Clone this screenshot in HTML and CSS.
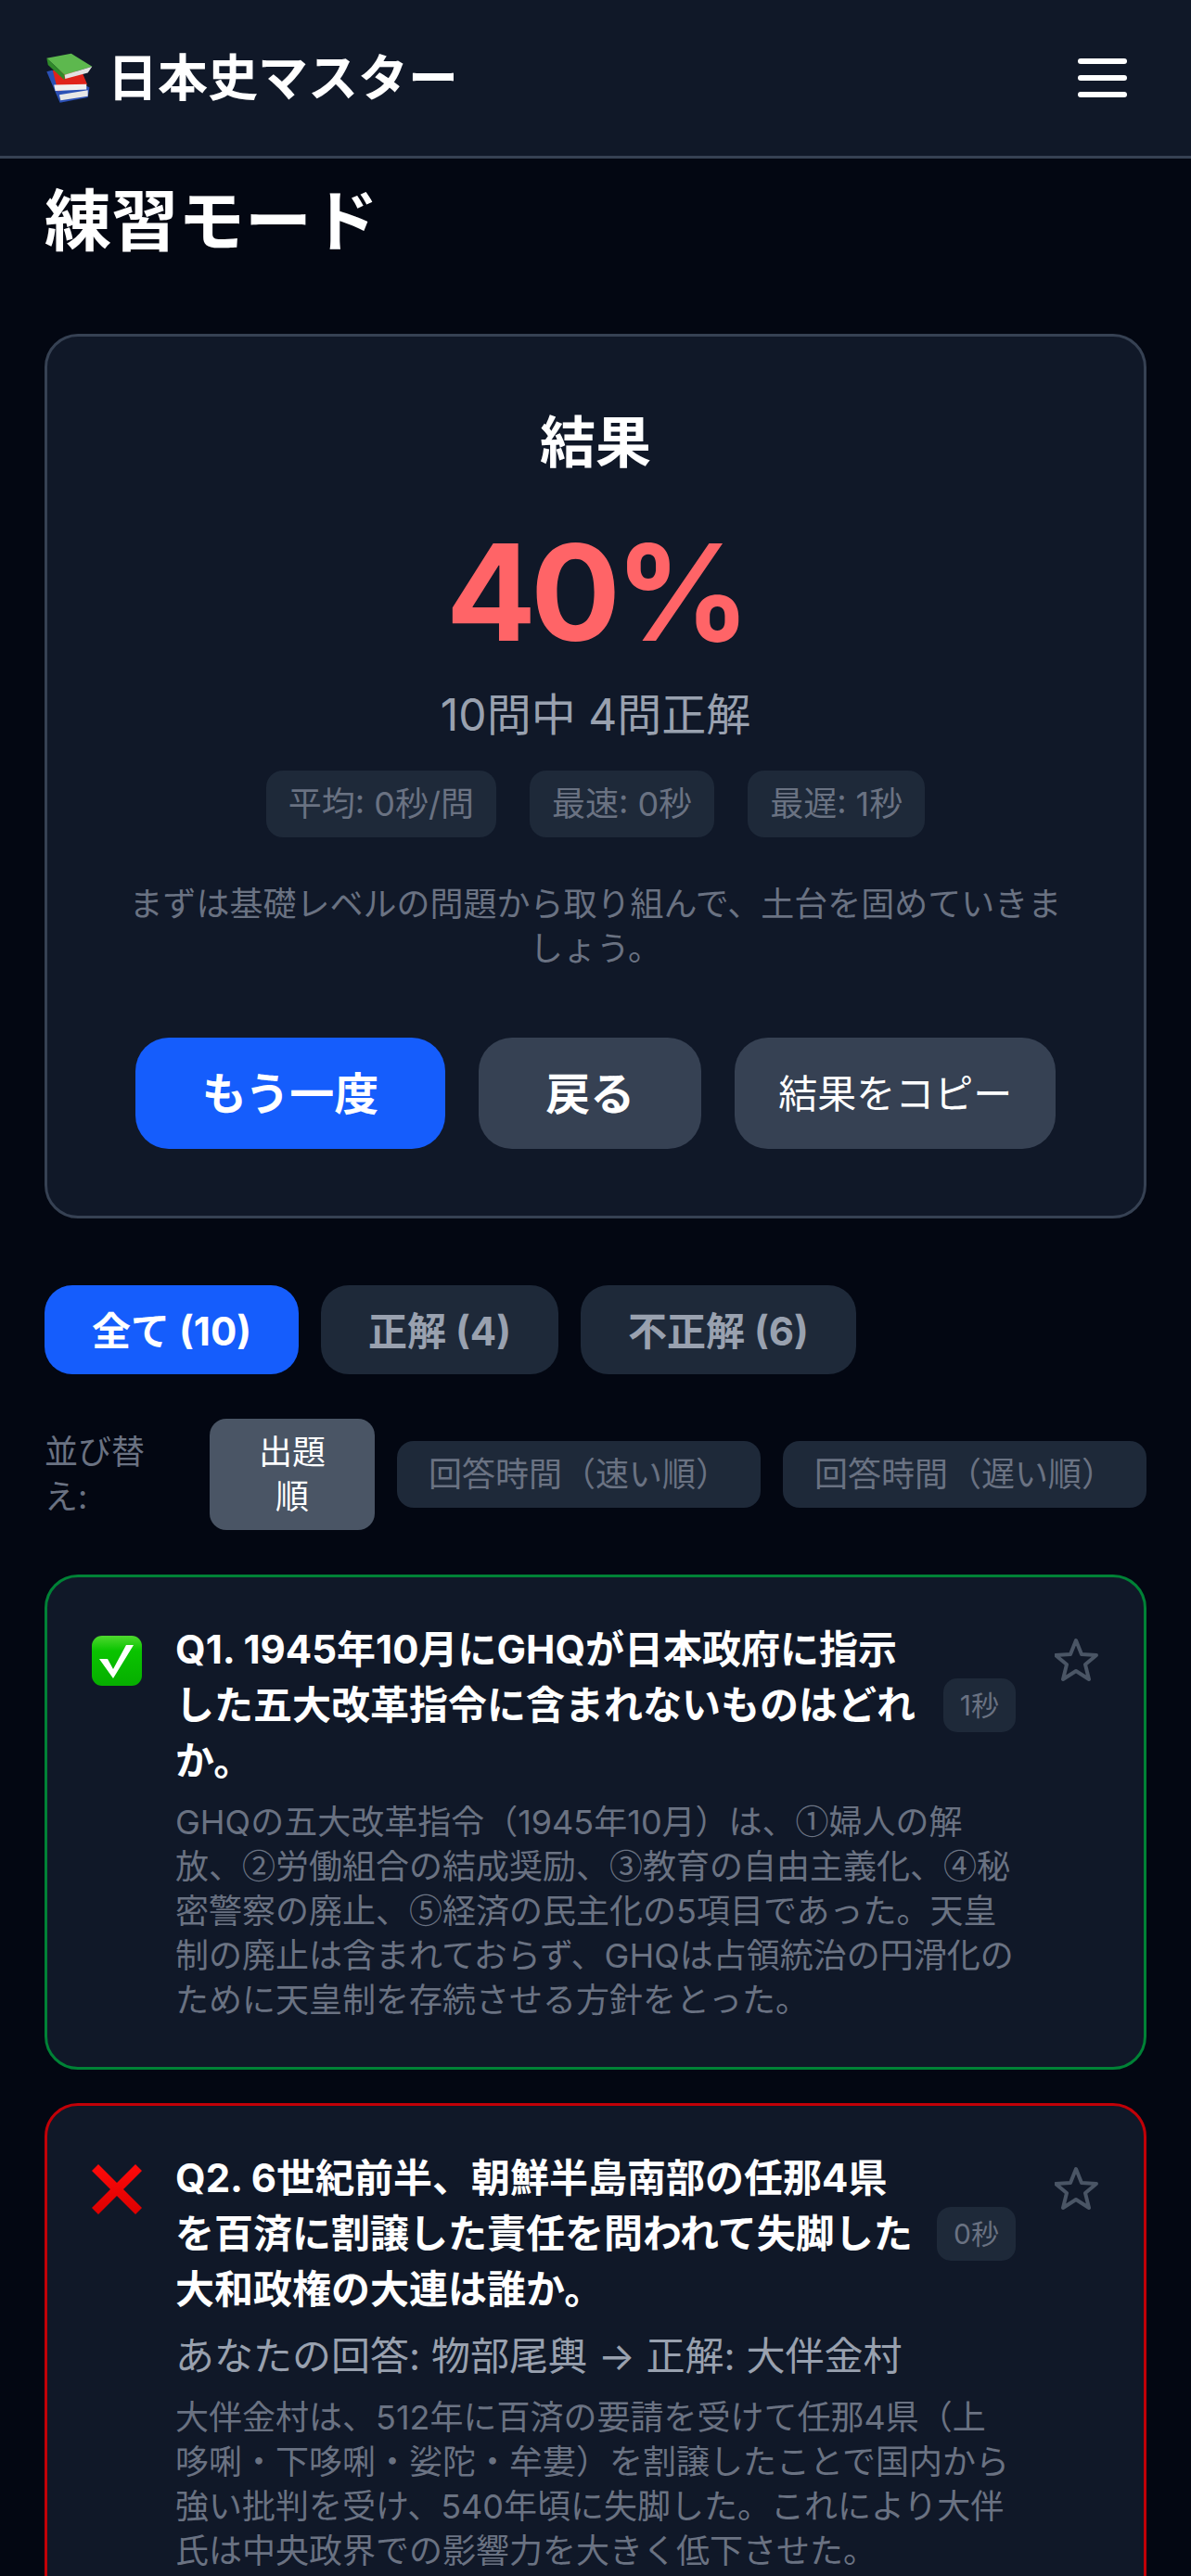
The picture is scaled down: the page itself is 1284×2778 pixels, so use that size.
FILE: index.html
```html
<!DOCTYPE html>
<html lang="ja">
<head>
<meta charset="UTF-8">
<meta name="viewport" content="width=device-width, initial-scale=1.0">
<title>日本史マスター</title>
<link rel="stylesheet" href="styles.css">
</head>
<body>
<header class="header">
  <div class="logo">
    <svg class="logo-icon" viewBox="60 50 150 165" aria-hidden="true">
      <path d="M66 112 L82 108 L195 160 L190 190 L106 206 Z" fill="#2b50b5"/>
      <path d="M104 182 L190 168 L190 186 L108 199 Z" fill="#e6e6e6"/>
      <path d="M84 108 L172 112 L188 150 L100 172 Z" fill="#e0231a"/>
      <path d="M88 152 L186 150 L186 166 L92 170 Z" fill="#f0f0f0"/>
      <path d="M66 72 L140 58 L203 97 L120 122 Z" fill="#5db84e"/>
      <path d="M66 72 L120 122 L120 138 L70 92 Z" fill="#2f8a2a"/>
      <path d="M120 122 L203 97 L190 116 L122 134 Z" fill="#e2e2e2"/>
    </svg>
    <span class="logo-text">日本史マスター</span>
  </div>
  <button class="menu-btn" aria-label="menu"><i></i><i></i><i></i></button>
</header>

<main class="page">
  <h1 class="page-title">練習モード</h1>

  <section class="result-card">
    <h2 class="result-title">結果</h2>
    <div class="score">40%</div>
    <p class="score-sub">10問中 4問正解</p>
    <div class="stats">
      <span class="stat">平均: 0秒/問</span>
      <span class="stat">最速: 0秒</span>
      <span class="stat">最遅: 1秒</span>
    </div>
    <p class="advice">まずは基礎レベルの問題から取り組んで、土台を固めていきましょう。</p>
    <div class="actions">
      <button class="btn btn-primary">もう一度</button>
      <button class="btn btn-gray">戻る</button>
      <button class="btn btn-copy">結果をコピー</button>
    </div>
  </section>

  <div class="tabs">
    <button class="tab tab-active">全て (10)</button>
    <button class="tab">正解 (4)</button>
    <button class="tab">不正解 (6)</button>
  </div>

  <div class="sort-row">
    <span class="sort-label">並び替え:</span>
    <button class="sort-btn sort-active">出題順</button>
    <button class="sort-btn">回答時間（速い順）</button>
    <button class="sort-btn">回答時間（遅い順）</button>
  </div>

  <article class="question correct">
    <svg class="mark" viewBox="0 0 54 54" aria-hidden="true">
      <defs>
        <linearGradient id="greenBox" x1="0" y1="0" x2="0" y2="1">
          <stop offset="0" stop-color="#4fd82f"/>
          <stop offset="0.3" stop-color="#0ac400"/>
          <stop offset="1" stop-color="#06ae00"/>
        </linearGradient>
      </defs>
      <rect width="54" height="54" rx="11" fill="url(#greenBox)"/>
      <path d="M8 25 L17 25 L23 36 L37 10 L45 10 L23 46 Z" fill="#fff"/>
    </svg>
    <div class="q-body">
      <div class="q-head">
        <h3 class="q-title">Q1. 1945年10月にGHQが日本政府に指示した五大改革指令に含まれないものはどれか。</h3>
        <span class="q-time">1秒</span>
      </div>
      <p class="q-note">GHQの五大改革指令（1945年10月）は、<span class="num">①</span>婦人の解<br>放、<span class="num">②</span>労働組合の結成奨励、<span class="num">③</span>教育の自由主義化、<span class="num">④</span>秘<br>密警察の廃止、<span class="num">⑤</span>経済の民主化の5項目であった。天皇<br>制の廃止は含まれておらず、GHQは占領統治の円滑化のために天皇制を存続させる方針をとった。</p>
    </div>
    <svg class="star" viewBox="0 0 48 48" aria-hidden="true">
      <path d="M23 3 L29 18 L45 19 L33 29 L37 45 L23 36 L9 45 L13 29 L1 19 L17 18 Z"/>
    </svg>
  </article>

  <article class="question wrong">
    <svg class="mark" viewBox="0 0 54 54" aria-hidden="true">
      <defs>
        <linearGradient id="redCross" x1="0" y1="0" x2="0" y2="1">
          <stop offset="0" stop-color="#ff0a0a"/>
          <stop offset="1" stop-color="#dc0000"/>
        </linearGradient>
      </defs>
      <path d="M7 0 L27 20 L47 0 L54 7 L34 27 L54 47 L47 54 L27 34 L7 54 L0 47 L20 27 L0 7 Z" fill="url(#redCross)"/>
    </svg>
    <div class="q-body">
      <div class="q-head">
        <h3 class="q-title">Q2. 6世紀前半、朝鮮半島南部の任那4県を百済に割譲した責任を問われて失脚した大和政権の大連は誰か。</h3>
        <span class="q-time">0秒</span>
      </div>
      <p class="q-answer">あなたの回答: 物部尾輿 → 正解: 大伴金村</p>
      <p class="q-note">大伴金村は、512年に百済の要請を受けて任那4県（上哆唎・下哆唎・娑陀・牟婁）を割譲したことで国内から強い批判を受け、540年頃に失脚した。これにより大伴氏は中央政界での影響力を大きく低下させた。</p>
    </div>
    <svg class="star" viewBox="0 0 48 48" aria-hidden="true">
      <path d="M23 3 L29 18 L45 19 L33 29 L37 45 L23 36 L9 45 L13 29 L1 19 L17 18 Z"/>
    </svg>
  </article>
</main>
</body>
</html>
```

FILE: styles.css
```css
* {
  box-sizing: border-box;
}

html, body {
  height: 2778px;
  overflow: hidden;
}

body {
  margin: 0;
  background-color: #030712;
  color: #fff;
  font-family: Inter, "Noto Sans CJK JP", sans-serif;
}

h1, h2, h3, p {
  margin: 0;
}

button {
  border: none;
  font-family: inherit;
}

/* top bar */
.header {
  height: 171px;
  padding: 0 69px 0 48px;
  display: flex;
  align-items: center;
  justify-content: space-between;
  background-color: #101828;
  border-bottom: 3px solid #364153;
}

.logo {
  display: flex;
  align-items: center;
  gap: 14px;
  font-size: 54px;
  font-weight: 700;
}

.logo-icon {
  width: 54px;
  height: 59px;
}

.logo-text {
  margin-bottom: 8px;
}

.menu-btn {
  width: 53px;
  padding: 0;
  display: flex;
  flex-direction: column;
  gap: 12px;
  background: none;
}

.menu-btn i {
  display: block;
  height: 6px;
  border-radius: 3px;
  background-color: #fff;
}

.page {
  padding: 19px 48px 0;
}

.page-title {
  font-size: 72px;
  line-height: 96px;
  font-weight: 700;
  margin-bottom: 74px;
}

/* result card */
.result-card {
  padding: 72px;
  background-color: #101828;
  border: 3px solid #364153;
  border-radius: 36px;
  text-align: center;
}

.result-title {
  font-size: 60px;
  line-height: 84px;
  font-weight: 700;
  margin-bottom: 48px;
}

.score {
  font-size: 144px;
  line-height: 144px;
  font-weight: 700;
  letter-spacing: -6px;
  color: #ff6467;
  margin-bottom: 24px;
}

.score-sub {
  font-size: 48px;
  line-height: 72px;
  color: #99a1af;
  margin-bottom: 24px;
}

.stats {
  display: flex;
  justify-content: center;
  gap: 36px;
  margin-bottom: 48px;
}

.stat {
  padding: 12px 24px;
  font-size: 36px;
  line-height: 48px;
  color: #6a7282;
  background-color: #1e2939;
  border-radius: 18px;
}

.advice {
  font-size: 36px;
  line-height: 48px;
  color: #6a7282;
  margin-bottom: 72px;
}

.actions {
  display: flex;
  justify-content: center;
  gap: 36px;
}

.btn {
  height: 120px;
  padding: 0 72px 6px;
  font-size: 48px;
  font-weight: 700;
  color: #fff;
  border-radius: 36px;
}

.btn-primary {
  background-color: #155dfc;
}

.btn-gray {
  background-color: #364153;
}

.btn-copy {
  padding: 0 47px 6px;
  font-size: 42px;
  font-weight: 400;
  background-color: #364153;
}

/* filter tabs */
.tabs {
  display: flex;
  gap: 24px;
  margin-top: 72px;
}

.tab {
  height: 96px;
  padding: 0 51px 4px;
  font-size: 42px;
  font-weight: 700;
  color: #99a1af;
  background-color: #1e2939;
  border-radius: 30px;
}

.tab-active {
  color: #fff;
  background-color: #155dfc;
}

.sort-row {
  display: flex;
  align-items: center;
  gap: 24px;
  margin-top: 48px;
}

.sort-label {
  width: 154px;
  flex: none;
  font-size: 36px;
  line-height: 48px;
  color: #6a7282;
}

.sort-btn {
  flex: 1 1 0;
  padding: 12px 30px;
  font-size: 36px;
  line-height: 48px;
  color: #6a7282;
  background-color: #1e2939;
  border-radius: 18px;
  white-space: nowrap;
}

.sort-active {
  flex: none;
  width: 178px;
  padding: 12px 36px;
  color: #fff;
  background-color: #4a5565;
  white-space: normal;
}

/* question list */
.question {
  margin-top: 36px;
  padding: 48px;
  display: flex;
  align-items: flex-start;
  background-color: #101828;
  border: 3px solid;
  border-radius: 36px;
}

.correct {
  margin-top: 48px;
  border-color: #008236;
}

.wrong {
  border-color: #c10007;
}

.mark {
  width: 54px;
  height: 54px;
  flex: none;
  margin: 15px 36px 0 0;
}

.q-body {
  flex: 1;
  min-width: 0;
}

.q-head {
  display: flex;
  align-items: center;
  gap: 24px;
}

.q-title {
  flex: 1;
  font-size: 42px;
  line-height: 60px;
  font-weight: 700;
}

.q-time {
  flex: none;
  padding: 9px 18px;
  font-size: 30px;
  line-height: 40px;
  color: #6a7282;
  background-color: #1e2939;
  border-radius: 15px;
}

.q-answer {
  margin-top: 12px;
  font-size: 42px;
  line-height: 60px;
  color: #99a1af;
}

.q-note {
  margin-top: 12px;
  font-size: 36px;
  line-height: 48px;
  color: #6a7282;
}

/* circled numbers come from the CJK font, Inter draws them too wide */
.num {
  display: inline-block;
  width: 36px;
  line-height: 36px;
  font-family: "Noto Sans CJK JP", sans-serif;
}

.star {
  width: 48px;
  height: 48px;
  flex: none;
  margin: 17px 0 0 42px;
  fill: none;
  stroke: #4a5565;
  stroke-width: 4;
  stroke-linejoin: round;
}
```
